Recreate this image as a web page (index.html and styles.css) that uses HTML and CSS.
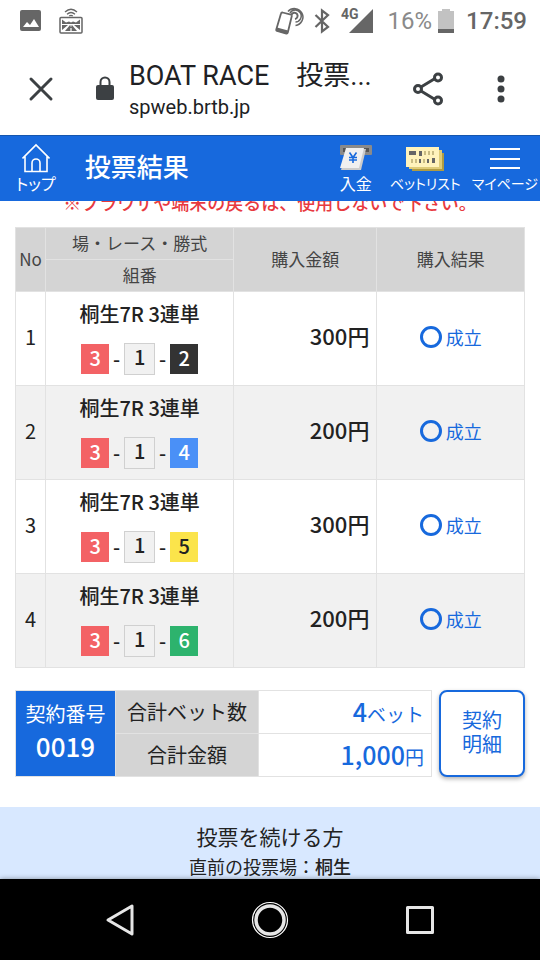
FILE: index.html
```html
<!DOCTYPE html>
<html lang="ja">
<head>
    <meta charset="UTF-8">
    <meta name="viewport" content="width=device-width, initial-scale=1.0">
    <title>BOAT RACE 投票結果</title>
    <link rel="stylesheet" href="styles.css">
</head>
<body>
    <div class="status-bar">
        <svg width="22" height="24" viewBox="0 0 22 24"><rect y="1" width="21" height="21" rx="2" fill="#666"/><path d="M3 18l4-5 3 3 4-6 5 8z" fill="#fff"/></svg>
        <svg class="cast" width="24" height="26" viewBox="0 0 24 26" fill="none" stroke="#666">
            <path d="M6 4q6-5.500 12 0M8 6.200q4-3.400 8 0M10.200 8q1.800-1.400 3.600 0" stroke-width="1.300"/>
            <rect x="1" y="9.500" width="22" height="15.500" rx="1" stroke-width="1.500"/>
            <path d="M3 11.500l4 3 3-1 2 1 2-1 3 1 4-3v4.500H3z" fill="#666" stroke="none"/>
            <path d="M3 17h6l-6 5zM21 17h-6l6 5zM6 23l5-6h2l5 6z" fill="#666" stroke="none"/>
            <path d="M12 17v1.500M12 20v3" stroke="#fff" stroke-width="1.200"/>
        </svg>
        <div class="status-right">
            <svg width="30" height="30" viewBox="0 0 30 30" fill="none" stroke="#666">
                <path d="M14 5.500a8.500 8.500 0 1 1 7.500 14M16 7a6 6 0 1 1 5.500 9" stroke-width="1.500"/>
                <path d="M17.500 8.500a3.200 3.200 0 1 1 3.500 4.500" stroke-width="2"/>
                <path d="M8.500 6.500l8.500 2.200q1 .3.800 1.300l-4 16.500q-.3 1.200-1.500 1L3 25q-1-.3-.8-1.300L7 7.500q.3-1.200 1.500-1z" fill="#fff" stroke-width="1.800"/>
                <path d="M3 21.500l11 3-.8 3.500L2 25z" fill="#666" stroke="none"/>
            </svg>
            <svg class="bluetooth" width="16" height="26" viewBox="0 0 16 26" fill="none" stroke="#666" stroke-width="2.200"><path d="M1.500 7L14 19l-6 4.500v-21L14 7 1.500 19"/></svg>
            <span class="network">4G</span>
            <svg class="signal" width="24" height="24" viewBox="0 0 24 24"><path d="M24 0v24H0z" fill="#666"/></svg>
            <span class="percent">16%</span>
            <svg width="16" height="26" viewBox="0 0 16 26"><path d="M0 3h4V1h8v2h4v22H0z" fill="#c2c2c2"/><path d="M0 21h16v4H0z" fill="#666"/></svg>
            <span class="time">17:59</span>
        </div>
    </div>

    <div class="browser-bar">
        <button class="icon-button" aria-label="閉じる"><svg width="26" height="26" viewBox="0 0 26 26" stroke="#3c4043" stroke-width="3" stroke-linecap="round"><path d="M3 3l20 20M23 3L3 23"/></svg></button>
        <svg class="lock" width="20" height="26" viewBox="0 0 20 26"><rect x="1" y="9" width="18" height="15" rx="2" fill="#3c4043"/><path d="M5.500 10V6a4.500 4.500 0 0 1 9 0v4" fill="none" stroke="#3c4043" stroke-width="2"/></svg>
        <div class="page-info">
            <div class="page-title">BOAT RACE　投票...</div>
            <div class="page-url">spweb.brtb.jp</div>
        </div>
        <button class="icon-button share" aria-label="共有"><svg width="32" height="34" viewBox="0 0 32 34" fill="none" stroke="#3c4043" stroke-width="3"><path d="M9 15l14-8.500M9 19l14 8.500"/><circle cx="6" cy="17" r="3.500"/><circle cx="26" cy="5.500" r="3.500"/><circle cx="26" cy="28.500" r="3.500"/></svg></button>
        <button class="icon-button" aria-label="メニュー"><svg width="10" height="30" viewBox="0 0 10 30" fill="#3c4043"><circle cx="5" cy="5" r="3.500"/><circle cx="5" cy="15" r="3.500"/><circle cx="5" cy="25" r="3.500"/></svg></button>
    </div>

    <header class="header">
        <a class="header-link top-link" href="#">
            <svg width="28" height="30" viewBox="0 0 28 30" fill="none" stroke="#fff" stroke-width="1.600"><path d="M.5 15.500L14 2l13.500 13.500M3 13v15.500h22V13"/><path d="M10 28.500V20a4 4 0 0 1 8 0v8.500"/></svg>
            <span>トップ</span>
        </a>
        <h1>投票結果</h1>
        <nav class="header-menu">
            <a class="header-link deposit-link" href="#">
                <svg width="34" height="30" viewBox="0 0 34 30"><rect x="1" y="2" width="32" height="10" rx="1" fill="#8a8a8a"/><rect x="4" y="5" width="26" height="4" fill="#555"/><path d="M8 6h19l-5 21H2z" fill="#ccc"/><path d="M7 5h18l-5 20H1z" fill="#f0f0f0"/><path d="M10.500 9.500l3.500 5 3.500-5M14 14v6M10 14.500h8M10 17h8" fill="none" stroke="#1769dd" stroke-width="1.600"/></svg>
                <span>入金</span>
            </a>
            <a class="header-link" href="#">
                <svg width="40" height="30" viewBox="0 0 40 30"><path d="M7 10h32v18H7z" fill="#b09c43"/><path d="M4 7h33v19H4z" fill="#dfcc78"/><path d="M1 4h33v20H1z" fill="#fff3bc"/><path d="M4 8h7v4H4zM14 8h3v5h-3zM14 16h2v4h-2zM22 16h2v4h-2zM27 15h3v5h-3z" fill="#666"/><path d="M19 8h2v4h-2zM23 8h2v4h-2zM27 8h2v4h-2zM6 16h2v4H6zM10 16h2v4h-2zM18 16h2v4h-2z" fill="#c9bc83"/></svg>
                <span>ベットリスト</span>
            </a>
            <a class="header-link" href="#">
                <svg width="32" height="30" viewBox="0 0 32 30" stroke="#fff" stroke-width="2"><path d="M1 6h30M1 16h30M1 25h30"/></svg>
                <span>マイページ</span>
            </a>
        </nav>
    </header>

    <main class="content">
        <p class="notice">※ブラウザや端末の戻るは、使用しないで下さい。</p>

        <table class="result-table">
            <colgroup>
                <col class="col-no">
                <col class="col-race">
                <col>
                <col class="col-result">
            </colgroup>
            <thead>
                <tr>
                    <th rowspan="2">No</th>
                    <th>場・レース・勝式</th>
                    <th rowspan="2">購入金額</th>
                    <th rowspan="2">購入結果</th>
                </tr>
                <tr>
                    <th>組番</th>
                </tr>
            </thead>
            <tbody>
                <tr>
                    <td>1</td>
                    <td>
                        <div class="race">桐生7R 3連単</div>
                        <div class="boats"><span class="boat boat3">3</span><i>-</i><span class="boat boat1">1</span><i>-</i><span class="boat boat2">2</span></div>
                    </td>
                    <td class="amount">300円</td>
                    <td><div class="result"><span class="circle"></span>成立</div></td>
                </tr>
                <tr>
                    <td>2</td>
                    <td>
                        <div class="race">桐生7R 3連単</div>
                        <div class="boats"><span class="boat boat3">3</span><i>-</i><span class="boat boat1">1</span><i>-</i><span class="boat boat4">4</span></div>
                    </td>
                    <td class="amount">200円</td>
                    <td><div class="result"><span class="circle"></span>成立</div></td>
                </tr>
                <tr>
                    <td>3</td>
                    <td>
                        <div class="race">桐生7R 3連単</div>
                        <div class="boats"><span class="boat boat3">3</span><i>-</i><span class="boat boat1">1</span><i>-</i><span class="boat boat5">5</span></div>
                    </td>
                    <td class="amount">300円</td>
                    <td><div class="result"><span class="circle"></span>成立</div></td>
                </tr>
                <tr>
                    <td>4</td>
                    <td>
                        <div class="race">桐生7R 3連単</div>
                        <div class="boats"><span class="boat boat3">3</span><i>-</i><span class="boat boat1">1</span><i>-</i><span class="boat boat6">6</span></div>
                    </td>
                    <td class="amount">200円</td>
                    <td><div class="result"><span class="circle"></span>成立</div></td>
                </tr>
            </tbody>
        </table>

        <div class="summary">
            <table class="summary-table">
                <tr>
                    <th class="contract" rowspan="2">契約番号<strong>0019</strong></th>
                    <th>合計ベット数</th>
                    <td><strong>4</strong>ベット</td>
                </tr>
                <tr>
                    <th>合計金額</th>
                    <td><strong>1,000</strong>円</td>
                </tr>
            </table>
            <button class="detail-button">契約<br>明細</button>
        </div>

        <section class="continue">
            <h2>投票を続ける方</h2>
            <p>直前の投票場：<b>桐生</b></p>
        </section>
    </main>

    <div class="nav-bar">
        <button aria-label="戻る"><svg width="40" height="40" viewBox="0 0 40 40" fill="none" stroke="#e6e6e6" stroke-width="3" stroke-linejoin="round"><path d="M32 6v28L8 20z"/></svg></button>
        <button aria-label="ホーム"><svg width="40" height="40" viewBox="0 0 40 40" fill="none" stroke="#e6e6e6"><circle cx="20" cy="20" r="17.500" stroke="#fff" stroke-width="1.200"/><circle cx="20" cy="20" r="14" stroke-width="3.500"/></svg></button>
        <button aria-label="アプリ履歴"><svg width="40" height="40" viewBox="0 0 40 40" fill="none" stroke="#e6e6e6" stroke-width="3" stroke-linejoin="round"><rect x="7.500" y="7.500" width="25" height="25"/></svg></button>
    </div>
</body>
</html>
```
FILE: styles.css
```css
* { margin: 0; padding: 0; box-sizing: border-box; }
body {
    font-family: "Noto Sans CJK JP", sans-serif;
    color: #222;
    background: #fff;
    height: 100vh;
    display: flex;
    flex-direction: column;
    overflow: hidden;
}
svg { display: block; flex-shrink: 0; }
button {
    font-family: inherit;
    background: none;
    border: none;
    cursor: pointer;
}
a { color: inherit; text-decoration: none; }

/* Android status bar */
.status-bar {
    display: flex;
    align-items: center;
    height: 42px;
    padding: 0 13px 0 20px;
    font-family: Roboto, sans-serif;
    color: #666;
    flex-shrink: 0;
}
.cast { margin-left: 17px; }
.status-right {
    display: flex;
    align-items: center;
    margin-left: auto;
}
.bluetooth { margin: 0 11px 0 10px; }
.network {
    font-size: 14px;
    font-weight: bold;
    line-height: 16px;
    align-self: flex-start;
    margin-right: -10px;
}
.signal { margin-right: 15px; }
.percent {
    font-size: 24px;
    color: #8a8a8a;
    margin-right: 6px;
}
.time {
    font-size: 24px;
    font-weight: 500;
    margin-left: 12px;
}

/* browser toolbar */
.browser-bar {
    display: flex;
    align-items: center;
    height: 93px;
    padding: 0 34px 0 28px;
    flex-shrink: 0;
}
.lock { margin: 0 14px 0 41px; }
.page-info {
    flex: 1;
    font-family: Roboto, "Noto Sans CJK JP", sans-serif;
    color: #202124;
    white-space: nowrap;
}
.page-title {
    font-size: 27px;
    line-height: 36px;
}
.page-url {
    font-size: 20px;
    line-height: 26px;
}
.share { margin-right: 52px; }

/* site header */
.header {
    display: flex;
    align-items: center;
    height: 66px;
    padding: 0 2px 0 16px;
    background: #1769dd;
    border-top: 1px solid #1556ae;
    color: #fff;
    flex-shrink: 0;
}
.header h1 {
    font-size: 26px;
    font-weight: 500;
    margin-left: 29px;
    padding-bottom: 6px;
}
.header-link {
    display: flex;
    flex-direction: column;
    align-items: center;
    font-size: 14px;
    line-height: 20px;
    padding-bottom: 2px;
    font-feature-settings: "palt";
    white-space: nowrap;
}
.top-link,
.deposit-link { font-size: 16px; }
.deposit-link { margin-right: 6px; }
.header-menu {
    display: flex;
    gap: 11px;
    margin-left: auto;
}

.content {
    flex: 1;
    overflow: hidden;
}
.notice {
    margin-top: -14px;
    font-size: 18px;
    font-weight: 500;
    line-height: 30px;
    color: #e83a3f;
    text-align: center;
}

/* bet results */
.result-table {
    width: calc(100% - 30px);
    margin: 10px 15px 0;
    border-collapse: collapse;
    table-layout: fixed;
    text-align: center;
}
.col-no { width: 30px; }
.col-race { width: 37%; }
.col-result { width: 29%; }
.result-table th,
.result-table td {
    border: 1px solid #e2e2e2;
}
.result-table th {
    height: 32px;
    padding-bottom: 2px;
    font-size: 17px;
    font-weight: 400;
    line-height: 20px;
    color: #444;
    background: #d4d4d4;
}
.result-table td {
    height: 94px;
    padding-bottom: 4px;
    font-size: 20px;
}
.result-table tbody tr:nth-child(even) { background: #f1f1f1; }
.race {
    font-weight: 500;
    line-height: 30px;
    margin-bottom: 14px;
}
.boats {
    display: flex;
    justify-content: center;
    align-items: center;
    font-weight: 500;
}
.boats i {
    width: 15px;
    font-style: normal;
}
.boat {
    width: 28px;
    height: 30px;
    line-height: 28px;
    color: #fff;
}
.boat1 {
    width: 31px;
    height: 32px;
    line-height: 26px;
    border: 1px solid #d0d0d0;
    background: #f1f1f1;
    color: #222;
}
.boat2 { background: #333; }
.boat3 { background: #f36265; }
.boat4 { background: #4a90f7; }
.boat5 { background: #fbe44b; color: #222; }
.boat6 { background: #2db36d; }
.result-table .amount {
    font-size: 22px;
    font-weight: 500;
    text-align: right;
    padding: 0 7px 8px 0;
}
.result {
    display: flex;
    justify-content: center;
    align-items: center;
    gap: 4px;
    font-size: 18px;
    color: #1769dd;
}
.circle {
    width: 22px;
    height: 22px;
    border: 3px solid #1769dd;
    border-radius: 50%;
}

/* totals */
.summary {
    display: flex;
    gap: 7px;
    margin: 22px 15px 30px;
}
.summary-table {
    flex: 1;
    border-collapse: collapse;
    font-size: 20px;
}
.summary-table th,
.summary-table td {
    height: 43px;
    border: 1px solid #e2e2e2;
    line-height: 32px;
}
.summary-table th {
    width: 143px;
    font-weight: 400;
    background: #d4d4d4;
}
.summary-table .contract {
    width: 100px;
    padding-bottom: 8px;
    background: #1769dd;
    color: #fff;
}
.contract strong { display: block; }
.summary-table td {
    text-align: right;
    font-size: 19px;
    color: #1769dd;
    padding-right: 7px;
}
.summary-table strong {
    font-size: 26px;
    font-weight: 500;
}
.summary-table td strong { font-size: 25px; }
.detail-button {
    width: 86px;
    padding-bottom: 4px;
    border: 2px solid #1769dd;
    border-radius: 8px;
    background: #fff;
    box-shadow: 0 2px 4px rgba(0,0,0,0.3);
    font-size: 20px;
    line-height: 24px;
    color: #1769dd;
}

.continue {
    padding: 14px 15px 40px;
    background: #d8e8ff;
    text-align: center;
}
.continue h2 {
    font-size: 21px;
    font-weight: 400;
    line-height: 30px;
}
.continue p {
    font-size: 18px;
    line-height: 30px;
}
.continue b { font-weight: 500; }

/* Android navigation bar */
.nav-bar {
    display: flex;
    justify-content: center;
    align-items: center;
    gap: 110px;
    height: 81px;
    background: #000;
    box-shadow: 0 0 5px rgba(0,0,0,0.4);
    z-index: 1;
    flex-shrink: 0;
}
```
